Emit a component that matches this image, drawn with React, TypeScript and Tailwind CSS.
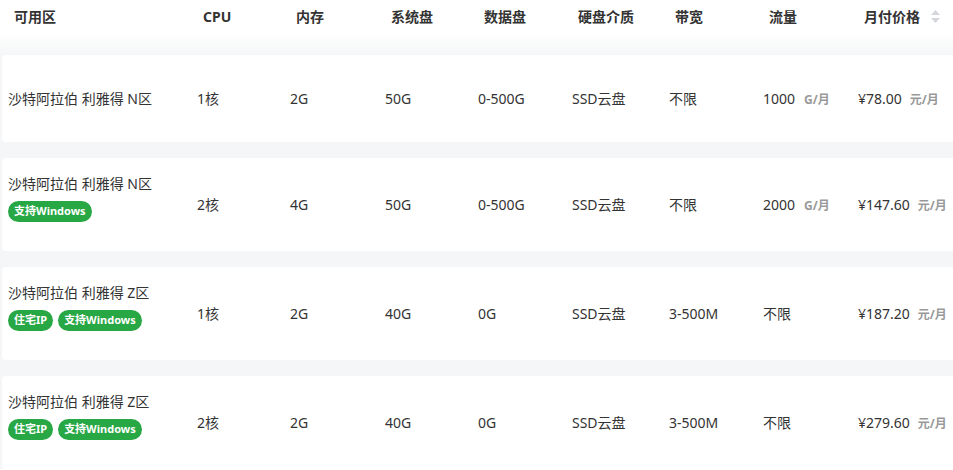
import { Fragment } from 'react';

type Plan = {
  zone: string;
  tags: string[];
  cpu: string;
  ram: string;
  sys: string;
  data: string;
  disk: string;
  bandwidth: string;
  traffic: string;
  trafficUnit?: string;
  price: string;
};

const plans: Plan[] = [
  {
    zone: '沙特阿拉伯 利雅得 N区',
    tags: [],
    cpu: '1核',
    ram: '2G',
    sys: '50G',
    data: '0-500G',
    disk: 'SSD云盘',
    bandwidth: '不限',
    traffic: '1000',
    trafficUnit: 'G/月',
    price: '¥78.00'
  },
  {
    zone: '沙特阿拉伯 利雅得 N区',
    tags: ['支持Windows'],
    cpu: '2核',
    ram: '4G',
    sys: '50G',
    data: '0-500G',
    disk: 'SSD云盘',
    bandwidth: '不限',
    traffic: '2000',
    trafficUnit: 'G/月',
    price: '¥147.60'
  },
  {
    zone: '沙特阿拉伯 利雅得 Z区',
    tags: ['住宅IP', '支持Windows'],
    cpu: '1核',
    ram: '2G',
    sys: '40G',
    data: '0G',
    disk: 'SSD云盘',
    bandwidth: '3-500M',
    traffic: '不限',
    price: '¥187.20'
  },
  {
    zone: '沙特阿拉伯 利雅得 Z区',
    tags: ['住宅IP', '支持Windows'],
    cpu: '2核',
    ram: '2G',
    sys: '40G',
    data: '0G',
    disk: 'SSD云盘',
    bandwidth: '3-500M',
    traffic: '不限',
    price: '¥279.60'
  }
];

const headers = ['可用区', 'CPU', '内存', '系统盘', '数据盘', '硬盘介质', '带宽', '流量'];

const cols = 'grid grid-cols-[189px_93px_95px_93px_94px_97px_94px_95px_1fr] items-center';

export default function App() {
  return (
    <div
      className="h-[470px] w-[953px] overflow-hidden bg-white text-[14px] text-[#333]"
      style={{ fontFamily: '"Noto Sans", "Noto Sans CJK SC", sans-serif' }}
    >
      <div className={`${cols} h-[33px] pl-[14px] font-bold`}>
        {headers.map((h) => (
          <div key={h}>{h}</div>
        ))}
        <div className="flex items-center gap-[10px]">
          <span>月付价格</span>
          <SortIcon />
        </div>
      </div>

      <div className="flex flex-col gap-[16px] bg-[linear-gradient(to_bottom,#ffffff,#f5f6f7_22px)] pt-[22px]">
        {plans.map((p, i) => (
          <div
            key={i}
            className={`${cols} ml-[2px] w-[970px] rounded-[4px] bg-white pl-[6px] ${
              i === 0 ? 'h-[87px]' : 'h-[93px]'
            }`}
          >
            <div className={p.tags.length ? 'pb-[13px]' : ''}>
              <div className="leading-[20px]">{p.zone}</div>
              {p.tags.length > 0 && (
                <div className="mt-[7px] flex gap-[5px]">
                  {p.tags.map((t) => (
                    <span
                      key={t}
                      className="flex h-[21px] items-center rounded-full bg-[#28a745] px-[6px] text-[11px] font-bold text-white"
                    >
                      {t}
                    </span>
                  ))}
                </div>
              )}
            </div>
            <div>{p.cpu}</div>
            <div>{p.ram}</div>
            <div>{p.sys}</div>
            <div>{p.data}</div>
            <div>{p.disk}</div>
            <div>{p.bandwidth}</div>
            <div className="flex items-baseline">
              <span>{p.traffic}</span>
              {p.trafficUnit ? (
                <Fragment>
                  <span className="ml-[9px] text-[12px] font-bold text-[#999]">{p.trafficUnit}</span>
                </Fragment>
              ) : null}
            </div>
            <div className="flex items-baseline">
              <span>{p.price}</span>
              <span className="ml-[8px] text-[12px] font-bold text-[#999]">元/月</span>
            </div>
          </div>
        ))}
      </div>
    </div>
  );
}

function SortIcon() {
  return (
    <svg width="11" height="15" viewBox="0 0 11 15" className="shrink-0">
      <path d="M5.5 1 L10 6 H1 Z" fill="#d3d6db" />
      <path d="M5.5 14 L10 9 H1 Z" fill="#d3d6db" />
    </svg>
  );
}
